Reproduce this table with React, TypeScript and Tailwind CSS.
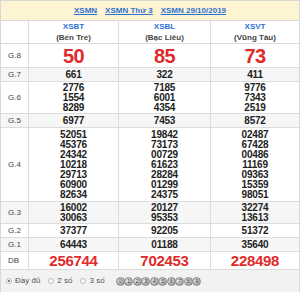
import React from "react";

const cols = [
  { code: "XSBT", name: "(Bến Tre)" },
  { code: "XSBL", name: "(Bạc Liêu)" },
  { code: "XSVT", name: "(Vũng Tàu)" },
];

type Row = { label: string; h: string; alt?: boolean; kind?: "g8" | "db"; vals: string[][] };

const rows: Row[] = [
  { label: "G.8", h: "h-[24px]", kind: "g8", vals: [["50"], ["85"], ["73"]] },
  { label: "G.7", h: "h-[14px]", alt: true, vals: [["661"], ["322"], ["411"]] },
  { label: "G.6", h: "h-[32px]", vals: [["2776", "1554", "8289"], ["7185", "6001", "4354"], ["9776", "7343", "2519"]] },
  { label: "G.5", h: "h-[14px]", alt: true, vals: [["6977"], ["7453"], ["8572"]] },
  {
    label: "G.4",
    h: "h-[74px]",
    vals: [
      ["52051", "45376", "24342", "10218", "29713", "60900", "82634"],
      ["19842", "73173", "00729", "61623", "28284", "01299", "24375"],
      ["02487", "67428", "00486", "11169", "09363", "15359", "98051"],
    ],
  },
  { label: "G.3", h: "h-[22px]", alt: true, vals: [["16002", "30063"], ["20127", "95353"], ["32274", "13613"]] },
  { label: "G.2", h: "h-[14px]", vals: [["37377"], ["92205"], ["51372"]] },
  { label: "G.1", h: "h-[14px]", alt: true, vals: [["64443"], ["01188"], ["35640"]] },
  { label: "DB", h: "h-[18px]", kind: "db", vals: [["256744"], ["702453"], ["228498"]] },
];

const grid = "grid grid-cols-[27px_90px_92px_1fr]";

function Cell({ vals, kind }: { vals: string[]; kind?: "g8" | "db" }) {
  let cls = "text-[10px] leading-[10px] font-bold text-[#222] tracking-[-0.2px]";
  if (kind === "g8") cls = "text-[20px] leading-[20px] font-bold text-[#e02b2b] tracking-[-0.5px]";
  if (kind === "db") cls = "text-[15px] leading-[15px] font-bold text-[#e02b2b] tracking-[-0.3px]";
  return (
    <div className="flex flex-col items-center justify-center border-l border-[#dcdcdc]">
      {vals.map((v, i) => (
        <span key={i} className={cls}>
          {v}
        </span>
      ))}
    </div>
  );
}

function Radio({ on, label }: { on?: boolean; label: string }) {
  return (
    <div className="flex items-center gap-[3px]">
      <span className="w-[6px] h-[6px] rounded-full border border-[#b8b8b8] bg-white flex items-center justify-center">
        {on && <span className="w-[2px] h-[2px] rounded-full bg-[#555]" />}
      </span>
      <span className="text-[8px] text-[#555]">{label}</span>
    </div>
  );
}

function Ball({ n }: { n: number }) {
  return (
    <span className="w-[9px] h-[9px] -mr-[0.5px] rounded-full border border-[#888] bg-[radial-gradient(circle_at_35%_35%,#eeeeee,#a8a8a8_65%,#7a7a7a)] flex items-center justify-center text-[5px] leading-none text-[#333]">
      {n}
    </span>
  );
}

export default function App() {
  return (
    <div className="w-[300px] h-[292px] bg-white font-['Liberation_Sans',Arial,sans-serif] border border-[#d8d8d8]">
      {/* top links */}
      <div className="h-[20px] bg-[#fdf4d2] border-b border-[#d8d8d8] flex items-center justify-center gap-[8px] text-[8px] font-bold text-[#2f72d6]">
        <span className="underline">XSMN</span>
        <span className="underline">XSMN Thứ 3</span>
        <span className="underline">XSMN 29/10/2019</span>
      </div>

      {/* head */}
      <div className={`${grid} h-[23px] border-b border-[#dcdcdc]`}>
        <div />
        {cols.map((c) => (
          <div key={c.code} className="flex flex-col items-center justify-center gap-[3px] border-l border-[#dcdcdc]">
            <span className="text-[8px] leading-[8px] font-bold text-[#2f72d6]">{c.code}</span>
            <span className="text-[8px] leading-[8px] font-bold text-[#444]">{c.name}</span>
          </div>
        ))}
      </div>

      {rows.map((r) => (
        <div key={r.label} className={`${grid} ${r.h} border-b border-[#dcdcdc] ${r.alt ? "bg-[#f6f6f6]" : ""}`}>
          <div className="flex items-center pl-[7px] text-[8px] text-[#444]">{r.label}</div>
          {r.vals.map((v, i) => (
            <Cell key={i} vals={v} kind={r.kind} />
          ))}
        </div>
      ))}

      {/* footer */}
      <div className="h-[22px] bg-[#f2f2f2] flex items-center pl-[5px] gap-[8px]">
        <Radio on label="Đầy đủ" />
        <Radio label="2 số" />
        <Radio label="3 số" />
        <div className="flex items-center ml-[3px]">
          {[0, 1, 2, 3, 4, 5, 6, 7, 8, 9].map((n) => (
            <Ball key={n} n={n} />
          ))}
        </div>
      </div>
    </div>
  );
}
